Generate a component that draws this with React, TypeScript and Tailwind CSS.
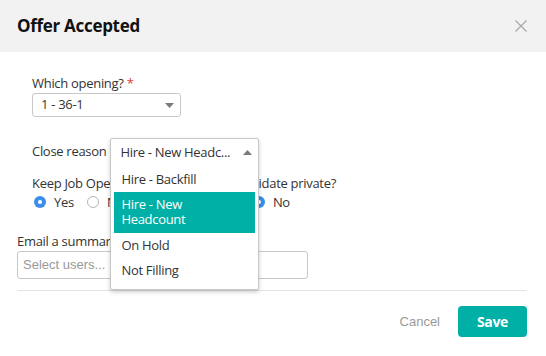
const font = { fontFamily: '"Open Sans", "Liberation Sans", sans-serif' };

function Radio({ checked, label }: { checked?: boolean; label: string }) {
    return (
        <label className="flex items-center gap-[8px]">
            {checked ? (
                <span className="w-[12px] h-[12px] rounded-full bg-[#3a8ee8] flex items-center justify-center">
                    <span className="w-[4px] h-[4px] rounded-full bg-white"></span>
                </span>
            ) : (
                <span className="w-[12px] h-[12px] rounded-full border border-[#b5b5b5] bg-white"></span>
            )}
            <span>{label}</span>
        </label>
    );
}

function Caret({ up }: { up?: boolean }) {
    return (
        <svg width="9" height="5" viewBox="0 0 9 5" className="shrink-0">
            <path d={up ? 'M0 5 L4.5 0 L9 5 Z' : 'M0 0 L9 0 L4.5 5 Z'} fill="#7a7a7a"/>
        </svg>
    );
}

export default function App() {
    return (
        <div className="w-[546px] h-[356px] bg-white overflow-hidden text-[13px] tracking-[-0.3px] text-[#333]" style={font}>
            <div className="h-[52px] bg-[#f2f2f2] flex items-center justify-between pl-[17px] pr-[19px]">
                <h1 className="text-[17px] font-bold text-[#111] tracking-[-0.3px]">Offer Accepted</h1>
                <svg width="12" height="12" viewBox="0 0 12 12">
                    <path d="M0.5 0.5 L11.5 11.5 M11.5 0.5 L0.5 11.5" stroke="#a8a8a8" strokeWidth="1.2"/>
                </svg>
            </div>

            <div className="pt-[22px]">
                <div className="pl-[32px]">
                    <div className="leading-[18px] mb-[1px]">
                        Which opening? <span className="text-[#e0373b]">*</span>
                    </div>
                    <div className="w-[149px] h-[24px] border border-[#c8c8c8] rounded-[3px] flex items-center justify-between pl-[8px] pr-[6px]">
                        <span>1 - 36-1</span>
                        <Caret/>
                    </div>

                    <div className="mt-[21px] flex items-center h-[26px] gap-[4px]">
                        <span className="leading-[18px]">Close reason</span>
                        <div className="relative w-[149px] h-[26px]">
                            <div className="absolute left-0 top-0 w-[149px] bg-white border border-[#c8c8c8] rounded-[2px] shadow-[0_2px_4px_rgba(0,0,0,0.2)] z-10">
                                <div className="h-[26px] flex items-center justify-between pl-[9px] pr-[6px] pt-[1px]">
                                    <span>Hire - New Headc...</span>
                                    <Caret up/>
                                </div>
                                <div className="px-[3px] pt-[3px] pb-[6px]">
                                    <div className="h-[24px] flex items-center px-[7px]">Hire - Backfill</div>
                                    <div className="bg-[#00b0a6] text-white px-[7px] pt-[5px] pb-[6px] leading-[15px]">
                                        Hire - New<br/>Headcount
                                    </div>
                                    <div className="h-[25px] flex items-center px-[7px]">On Hold</div>
                                    <div className="h-[25px] flex items-center px-[7px]">Not Filling</div>
                                </div>
                            </div>
                        </div>
                    </div>

                    <div className="mt-[10px] flex">
                        <div className="w-[166px]">
                            <div className="leading-[18px] whitespace-nowrap">Keep Job Opening open?</div>
                            <div className="mt-[1px] flex gap-[13px] pl-[2px] leading-[18px]">
                                <Radio checked label="Yes"/>
                                <Radio label="No"/>
                            </div>
                        </div>
                        <div>
                            <div className="leading-[18px] whitespace-nowrap">Keep candidate private?</div>
                            <div className="mt-[1px] flex gap-[13px] pl-[2px] leading-[18px]">
                                <Radio label="Yes"/>
                                <Radio checked label="No"/>
                            </div>
                        </div>
                    </div>
                </div>

                <div className="pl-[17px] pr-[19px] mt-[21px]">
                    <div className="leading-[18px] mb-[1px]">Email a summary to:</div>
                    <div className="w-[291px] h-[28px] border border-[#c8c8c8] rounded-[3px] flex items-center pl-[5px] text-[#999] tracking-normal"
                         style={{ fontFamily: '"Liberation Sans", Arial, sans-serif' }}>
                        Select users...
                    </div>
                    <div className="mt-[11px] h-px bg-[#e3e3e3]"></div>
                    <div className="flex items-center justify-end mt-[15px] gap-[18px]">
                        <span className="text-[#999] tracking-normal" style={{ fontFamily: '"Liberation Sans", Arial, sans-serif' }}>Cancel</span>
                        <button className="w-[69px] h-[31px] rounded-[4px] bg-[#00b0a6] text-white font-bold text-[14px]">Save</button>
                    </div>
                </div>
            </div>
        </div>
    );
}
